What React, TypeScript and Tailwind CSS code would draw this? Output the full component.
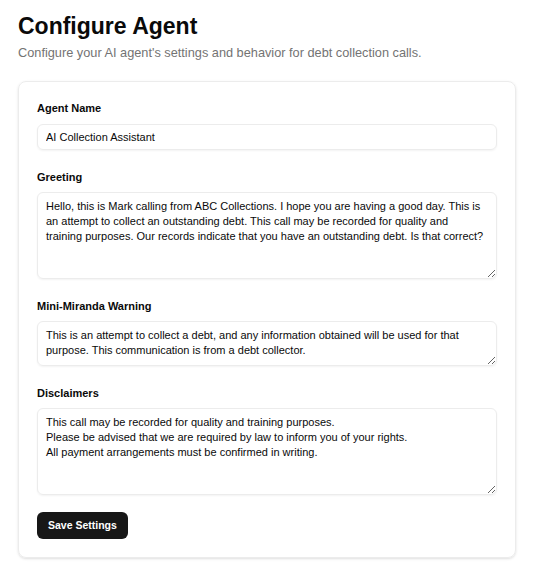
import React from 'react';

const fields = [
  {
    label: 'Greeting',
    rows: 'h-[87px]',
    value:
      'Hello, this is Mark calling from ABC Collections. I hope you are having a good day. This is an attempt to collect an outstanding debt. This call may be recorded for quality and training purposes. Our records indicate that you have an outstanding debt. Is that correct?',
  },
  {
    label: 'Mini-Miranda Warning',
    rows: 'h-[45px]',
    value:
      'This is an attempt to collect a debt, and any information obtained will be used for that purpose. This communication is from a debt collector.',
  },
  {
    label: 'Disclaimers',
    rows: 'h-[87px]',
    value:
      'This call may be recorded for quality and training purposes.\nPlease be advised that we are required by law to inform you of your rights.\nAll payment arrangements must be confirmed in writing.',
  },
];

export default function App() {
  return (
    <div className="min-h-screen bg-white px-[18px] pt-[12px] pb-[18px] font-['Liberation_Sans',sans-serif] text-[#0a0a0a]">
      <h1 className="text-[23px] font-bold leading-[28px]">Configure Agent</h1>
      <p className="mt-[4px] text-[12.75px] leading-[18px] text-[#737373]">
        Configure your AI agent's settings and behavior for debt collection calls.
      </p>

      <div className="mt-[19px] rounded-lg border border-[#ececec] shadow-sm p-[18px] pt-[19px]">
        <div className="flex flex-col gap-[20px]">
          <div className="flex flex-col gap-[9px]">
            <label className="text-[11px] leading-[14px] font-bold">Agent Name</label>
            <input
              readOnly
              value="AI Collection Assistant"
              className="h-[26px] w-full rounded-md border border-[#ececec] px-[8px] text-[11px] shadow-xs outline-none"
            />
          </div>

          {fields.map((f) => (
            <div key={f.label} className="flex flex-col gap-[8px]">
              <label className="text-[11px] leading-[14px] font-bold">{f.label}</label>
              <textarea
                readOnly
                value={f.value}
                className={`${f.rows} w-full rounded-md border border-[#ececec] pl-[8px] pr-[12px] py-[6px] text-[11px] leading-[15px] shadow-xs outline-none`}
              />
            </div>
          ))}

          <div className="-mt-[3px]">
            <button className="h-[27px] rounded-md bg-[#171717] px-[11px] text-[10.5px] font-bold text-white">
              Save Settings
            </button>
          </div>
        </div>
      </div>
    </div>
  );
}
